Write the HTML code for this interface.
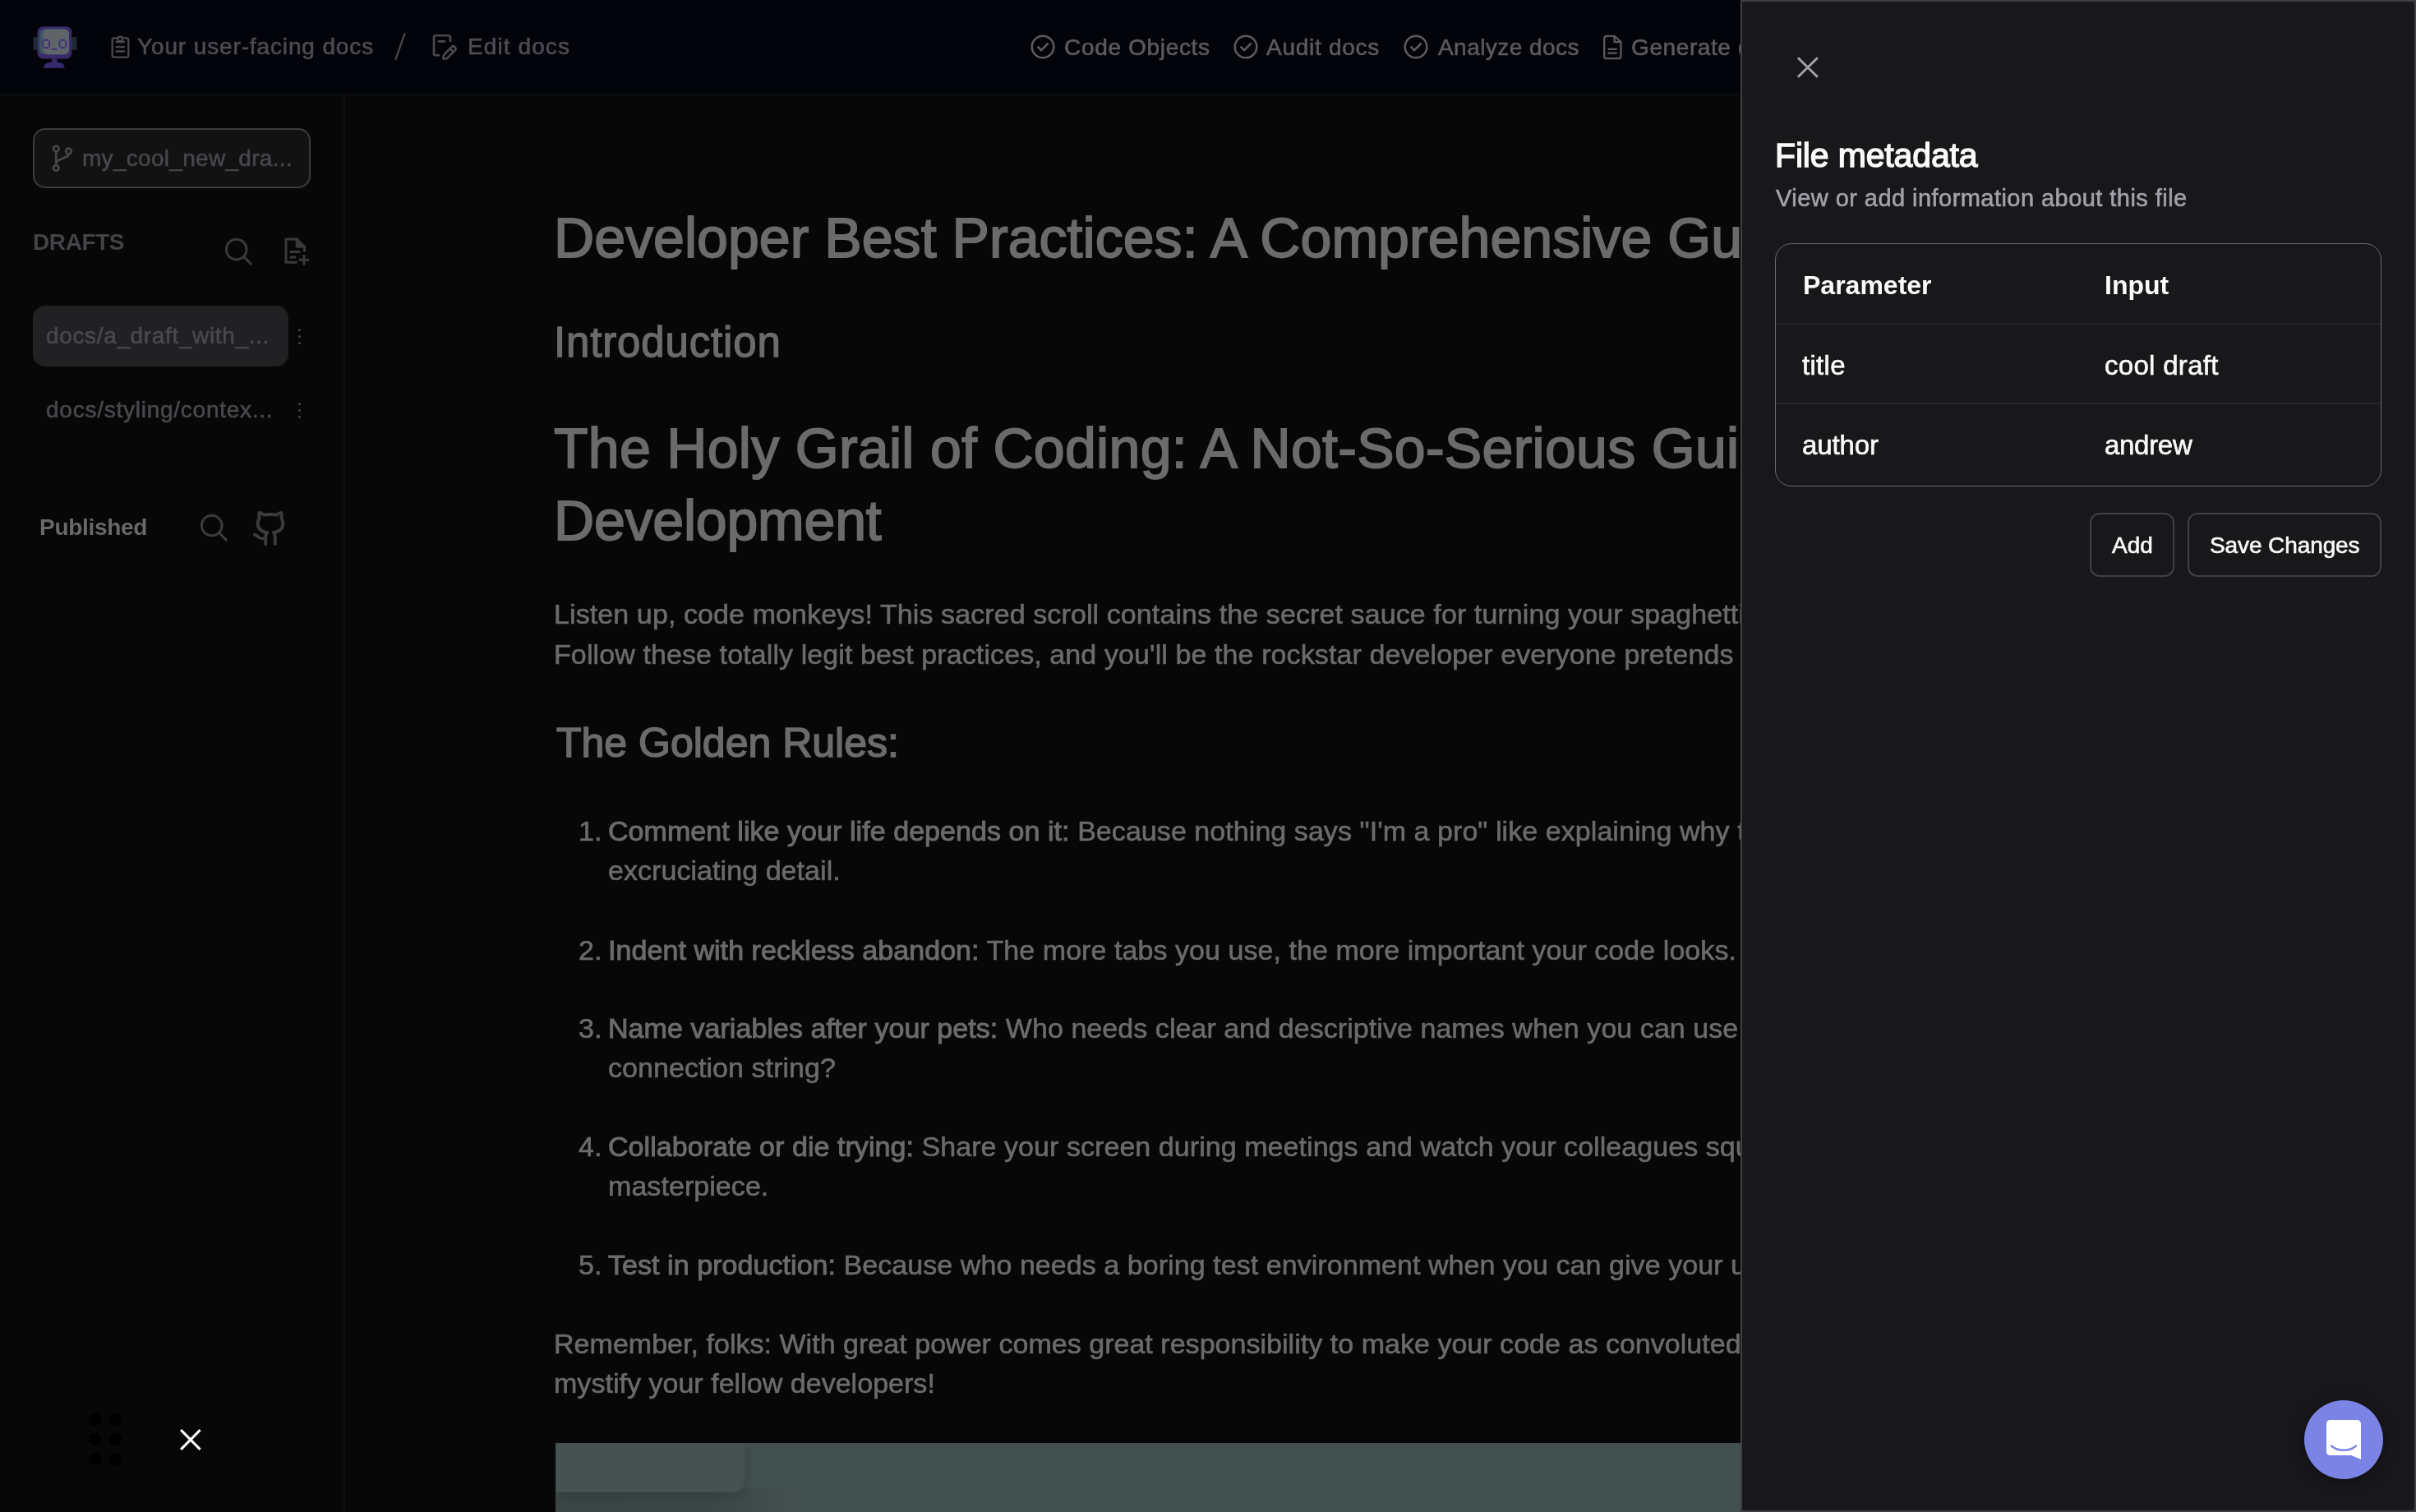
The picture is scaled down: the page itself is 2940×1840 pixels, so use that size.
<!DOCTYPE html>
<html><head><meta charset="utf-8"><title>File metadata</title>
<style>
html,body{margin:0;padding:0;}
@media (max-width:2000px){html{zoom:0.5;}}
body{width:2940px;height:1840px;overflow:hidden;position:relative;background:#070707;font-family:"Liberation Sans",sans-serif;}
.t{position:absolute;white-space:nowrap;line-height:1;will-change:transform;}
.abs{position:absolute;}
#hdr{position:absolute;left:0;top:0;width:2940px;height:114px;background:#03040a;border-bottom:2px solid #0c0d12;}
#side{position:absolute;left:0;top:116px;width:418px;height:1724px;background:#070707;border-right:2px solid #111111;}
#panel{position:absolute;left:2118px;top:0;width:822px;height:1840px;box-sizing:border-box;background:#18181b;border:2px solid #3f3f46;overflow:hidden;}
#panel .t, #panel .abs{margin-left:-2px;margin-top:-2px;}
</style></head>
<body>
<div id="hdr"></div><svg class="abs" style="left:38px;top:30px" width="58" height="56" viewBox="38 30 58 56">
<rect x="40.5" y="45" width="53" height="16" rx="1.5" fill="#1d2830"/>
<rect x="45.5" y="32.3" width="41.8" height="39.3" rx="7" fill="#3a2a6a"/>
<rect x="48" y="35.4" width="36" height="30.8" rx="6" fill="#3d5560"/>
<rect x="52.2" y="35.4" width="31.8" height="30.8" rx="6" fill="#5e6468"/>
<g fill="#3d2a7e">
<rect x="51.3" y="49.6" width="1.8" height="7.6"/><rect x="59.1" y="49.6" width="1.8" height="7.6"/>
<rect x="53.1" y="47.8" width="6" height="1.8"/><rect x="53.1" y="57.2" width="6" height="1.8"/>
<rect x="71.6" y="49.6" width="1.8" height="7.6"/><rect x="79.3" y="49.6" width="1.8" height="7.6"/>
<rect x="73.4" y="47.8" width="5.9" height="1.8"/><rect x="73.4" y="57.2" width="5.9" height="1.8"/>
<rect x="62.5" y="59.2" width="7.5" height="1.6"/>
</g>
<rect x="63" y="71.6" width="6.5" height="4.5" fill="#36296f"/>
<path d="M53.4 82.8 Q53.4 75.7 62 75.7 L70 75.7 Q78.6 75.7 78.6 82.8 Z" fill="#36296f"/>
<path d="M55.5 81.2h5" stroke="#5a5080" stroke-width="1" opacity="0.6"/>
</svg><svg class="abs" style="left:128px;top:38px" width="36" height="38" viewBox="128 38 36 38" fill="none" stroke="#4a4a4e" stroke-width="2.3" stroke-linecap="round" stroke-linejoin="round">
<path d="M142 46.3h-3.3a2 2 0 0 0-2 2v19.3a2 2 0 0 0 2 2h15.6a2 2 0 0 0 2-2V48.3a2 2 0 0 0-2-2H151"/>
<rect x="143.6" y="44.8" width="5.3" height="5" rx="1.2"/>
<path d="M141.6 51h9.4M141.6 57.1h9.4M141.6 62.5h9.4"/>
</svg><div class="t" style="left:167px;top:43.0px;font-size:28px;color:#4c4c52;font-weight:400;letter-spacing:0.87px;-webkit-text-stroke:0.6px currentColor;">Your user-facing docs</div>
<svg class="abs" style="left:476px;top:38px" width="22" height="38" viewBox="0 0 22 38"><path d="M16.5 3 L5.5 34" stroke="#45454a" stroke-width="2.3" stroke-linecap="round"/></svg><svg class="abs" style="left:520px;top:36px" width="40" height="40" viewBox="520 36 40 40" fill="none" stroke="#4a4a4e" stroke-width="2.6" stroke-linecap="round" stroke-linejoin="round">
<path d="M534 67.2h-3.8a2.2 2.2 0 0 1-2.2-2.2V45.5a2.2 2.2 0 0 1 2.2-2.2h15.6a2.2 2.2 0 0 1 2.2 2.2V50"/>
<path d="M533.8 50.4h7.2"/>
<path d="M549.5 57.2a2.9 2.9 0 0 1 4.1 4.1l-9.3 9.3c-.6.6-1.4.9-2.2.9h-2.6v-2.6c0-.8.3-1.6.9-2.2z"/>
<path d="M547.6 59.1l4.1 4.1"/>
</svg><div class="t" style="left:568.5px;top:43.0px;font-size:28px;color:#4c4c52;font-weight:400;letter-spacing:1.1px;-webkit-text-stroke:0.6px currentColor;">Edit docs</div>
<svg class="abs" style="left:1252px;top:40px" width="34" height="34" viewBox="0 0 34 34" fill="none" stroke="#5b5b5c" stroke-width="2.6" stroke-linejoin="miter"><circle cx="17" cy="17" r="13.3"/><path d="M10.6 16.6l4.4 4.5 8.6-8.6"/></svg><div class="t" style="left:1294.5px;top:43.5px;font-size:28px;color:#5b5b5c;font-weight:400;letter-spacing:0.67px;-webkit-text-stroke:0.6px currentColor;">Code Objects</div>
<svg class="abs" style="left:1498.5px;top:40px" width="34" height="34" viewBox="0 0 34 34" fill="none" stroke="#5b5b5c" stroke-width="2.6" stroke-linejoin="miter"><circle cx="17" cy="17" r="13.3"/><path d="M10.6 16.6l4.4 4.5 8.6-8.6"/></svg><div class="t" style="left:1541px;top:43.5px;font-size:28px;color:#5b5b5c;font-weight:400;letter-spacing:0.72px;-webkit-text-stroke:0.6px currentColor;">Audit docs</div>
<svg class="abs" style="left:1706px;top:40px" width="34" height="34" viewBox="0 0 34 34" fill="none" stroke="#5b5b5c" stroke-width="2.6" stroke-linejoin="miter"><circle cx="17" cy="17" r="13.3"/><path d="M10.6 16.6l4.4 4.5 8.6-8.6"/></svg><div class="t" style="left:1749.5px;top:43.5px;font-size:28px;color:#5b5b5c;font-weight:400;letter-spacing:0.44px;-webkit-text-stroke:0.6px currentColor;">Analyze docs</div>
<svg class="abs" style="left:1946px;top:38px" width="34" height="38" viewBox="1946 38 34 38" fill="none" stroke="#5b5b5c" stroke-width="2.3" stroke-linecap="round" stroke-linejoin="round"><path d="M1964.6 43.8h-9.6a2.8 2.8 0 0 0-2.8 2.8v21.8a2.8 2.8 0 0 0 2.8 2.8h14.6a2.8 2.8 0 0 0 2.8-2.8V51.2z"/><path d="M1964.6 43.8v7.4h7.6"/><path d="M1957.4 59.8h9.6M1957.4 64.6h9.6"/></svg><div class="t" style="left:1985px;top:43.5px;font-size:28px;color:#5b5b5c;font-weight:400;letter-spacing:0.6px;-webkit-text-stroke:0.6px currentColor;">Generate docs</div>
<div id="side"></div><div class="abs" style="left:40px;top:156px;width:338px;height:73px;box-sizing:border-box;border:2px solid #3d3d3f;border-radius:15px;background:#121212"></div><svg class="abs" style="left:60px;top:174px" width="32" height="38" viewBox="0 0 32 38" fill="none" stroke="#45454a" stroke-width="2.8" stroke-linecap="round"><circle cx="8.3" cy="7" r="3.3"/><circle cx="8.3" cy="30.5" r="3.3"/><circle cx="23.5" cy="10" r="3.3"/><path d="M8.3 10.3v16.9M23.5 13.3c0 6-15.2 5-15.2 12"/></svg><div class="t" style="left:100px;top:179.1px;font-size:28px;color:#46464c;font-weight:400;letter-spacing:0.3px;-webkit-text-stroke:0.6px currentColor;">my_cool_new_dra...</div>
<div class="t" style="left:40px;top:280.8px;font-size:28px;color:#434348;font-weight:700;letter-spacing:-0.4px;">DRAFTS</div>
<svg class="abs" style="left:270px;top:286px" width="40" height="40" viewBox="0 0 40 40" fill="none" stroke="#3a3a3a" stroke-width="3" stroke-linecap="round"><circle cx="17.7" cy="17.5" r="12.3"/><path d="M26.5 26.3l8.8 8.8"/></svg><svg class="abs" style="left:344px;top:287px" width="36" height="38" viewBox="0 0 36 38" fill="none" stroke="#3a3a3a" stroke-width="3" stroke-linecap="square"><path d="M16.2 32.3H4V4h13.2l9.3 9.3V18" stroke-linejoin="round"/><path d="M17.2 4v9.3h9.3" fill="#3a3a3a" stroke-linejoin="round"/><path d="M10.2 19.5h9.5M10.2 25.9h4.5M25.9 24.5v9.7M21.2 29.2h9.3"/></svg><div class="abs" style="left:40px;top:372px;width:311px;height:74px;border-radius:15px;background:#212123"></div><div class="t" style="left:56px;top:394.8px;font-size:28px;color:#48484e;font-weight:400;letter-spacing:0.65px;-webkit-text-stroke:0.6px currentColor;">docs/a_draft_with_...</div>
<div class="abs" style="left:362.8px;top:399.8px;width:3.6px;height:3.6px;border-radius:50%;background:#46464b"></div><div class="abs" style="left:362.8px;top:407.8px;width:3.6px;height:3.6px;border-radius:50%;background:#46464b"></div><div class="abs" style="left:362.8px;top:415.8px;width:3.6px;height:3.6px;border-radius:50%;background:#46464b"></div><div class="t" style="left:56px;top:484.8px;font-size:28px;color:#48484e;font-weight:400;letter-spacing:0.75px;-webkit-text-stroke:0.6px currentColor;">docs/styling/contex...</div>
<div class="abs" style="left:362.8px;top:489.9px;width:3.6px;height:3.6px;border-radius:50%;background:#46464b"></div><div class="abs" style="left:362.8px;top:497.9px;width:3.6px;height:3.6px;border-radius:50%;background:#46464b"></div><div class="abs" style="left:362.8px;top:505.9px;width:3.6px;height:3.6px;border-radius:50%;background:#46464b"></div><div class="t" style="left:48px;top:628.3px;font-size:28px;color:#686868;font-weight:700;letter-spacing:-0.3px;">Published</div>
<svg class="abs" style="left:240px;top:622px" width="40" height="40" viewBox="0 0 40 40" fill="none" stroke="#3c3c3c" stroke-width="3" stroke-linecap="round"><circle cx="17.7" cy="17.5" r="12.3"/><path d="M26.5 26.3l8.8 8.8"/></svg><svg class="abs" style="left:306px;top:620px" width="46" height="46" viewBox="0 0 24 24" fill="none" stroke="#3c3c3c" stroke-width="2.0" stroke-linecap="round" stroke-linejoin="round"><path d="M15 22v-4a4.8 4.8 0 0 0-1-3.5c3 0 6-2 6-5.5.08-1.25-.27-2.48-1-3.5.28-1.15.28-2.35 0-3.5 0 0-1 0-3 1.5-2.64-.5-5.36-.5-8 0C6 2 5 2 5 2c-.3 1.15-.3 2.35 0 3.5A5.403 5.403 0 0 0 4 9c0 3.5 3 5.5 6 5.5-.39.49-.68 1.05-.85 1.65-.17.6-.22 1.23-.15 1.85v4"/><path d="M9 18c-4.51 2-5-2-7-2"/></svg><div class="abs" style="left:108.4px;top:1720.1000000000001px;width:15.2px;height:15.2px;border-radius:50%;background:#000"></div><div class="abs" style="left:108.4px;top:1744.1000000000001px;width:15.2px;height:15.2px;border-radius:50%;background:#000"></div><div class="abs" style="left:108.4px;top:1768.1000000000001px;width:15.2px;height:15.2px;border-radius:50%;background:#000"></div><div class="abs" style="left:132.4px;top:1720.1000000000001px;width:15.2px;height:15.2px;border-radius:50%;background:#000"></div><div class="abs" style="left:132.4px;top:1744.1000000000001px;width:15.2px;height:15.2px;border-radius:50%;background:#000"></div><div class="abs" style="left:132.4px;top:1768.1000000000001px;width:15.2px;height:15.2px;border-radius:50%;background:#000"></div><svg class="abs" style="left:214px;top:1734px" width="36" height="36" viewBox="214 1734 36 36" stroke="#fff" stroke-width="3"><path d="M220.1 1740.1l23.5 23.8M243.6 1740.1l-23.5 23.8"/></svg><div class="t" style="left:674px;top:255.1px;font-size:68px;color:#6b6b6b;font-weight:400;letter-spacing:0.05px;-webkit-text-stroke:1.8px #6b6b6b;">Developer Best Practices: A Comprehensive Guide</div>
<div class="t" style="left:674px;top:391.2px;font-size:51px;color:#6b6b6b;font-weight:400;letter-spacing:0.85px;-webkit-text-stroke:1.3px #6b6b6b;">Introduction</div>
<div class="t" style="left:674px;top:510.7px;font-size:68px;color:#6b6b6b;font-weight:400;letter-spacing:0.3px;-webkit-text-stroke:1.8px #6b6b6b;">The Holy Grail of Coding: A Not-So-Serious Guide to</div>
<div class="t" style="left:674px;top:598.9px;font-size:68px;color:#6b6b6b;font-weight:400;letter-spacing:-0.2px;-webkit-text-stroke:1.8px #6b6b6b;">Development</div>
<div class="t" style="left:674px;top:730.4px;font-size:34px;color:#6b6b6b;font-weight:400;letter-spacing:0.1px;-webkit-text-stroke:0.6px currentColor;">Listen up, code monkeys! This sacred scroll contains the secret sauce for turning your spaghetti code</div>
<div class="t" style="left:674px;top:778.5px;font-size:34px;color:#6b6b6b;font-weight:400;letter-spacing:0.1px;-webkit-text-stroke:0.6px currentColor;">Follow these totally legit best practices, and you&#39;ll be the rockstar developer everyone pretends to be.</div>
<div class="t" style="left:677px;top:879.1px;font-size:50px;color:#6b6b6b;font-weight:400;letter-spacing:0px;-webkit-text-stroke:1.6px #6b6b6b;">The Golden Rules:</div>
<div class="t" style="left:703.5px;top:994.1px;font-size:34px;color:#6b6b6b;letter-spacing:0.06px;-webkit-text-stroke:0.6px currentColor;">1.</div>
<div class="t" style="left:740px;top:994.1px;font-size:34px;color:#6b6b6b;letter-spacing:0.06px;-webkit-text-stroke:0.6px currentColor;"><span style="-webkit-text-stroke:1.0px #6b6b6b">Comment like your life depends on it:</span> Because nothing says &quot;I&#39;m a pro&quot; like explaining why this works</div>
<div class="t" style="left:740px;top:1042.2px;font-size:34px;color:#6b6b6b;font-weight:400;letter-spacing:0.06px;-webkit-text-stroke:0.6px currentColor;">excruciating detail.</div>
<div class="t" style="left:703.5px;top:1138.5px;font-size:34px;color:#6b6b6b;letter-spacing:0.06px;-webkit-text-stroke:0.6px currentColor;">2.</div>
<div class="t" style="left:740px;top:1138.5px;font-size:34px;color:#6b6b6b;letter-spacing:0.06px;-webkit-text-stroke:0.6px currentColor;"><span style="-webkit-text-stroke:1.0px #6b6b6b">Indent with reckless abandon:</span> The more tabs you use, the more important your code looks.</div>
<div class="t" style="left:703.5px;top:1233.7px;font-size:34px;color:#6b6b6b;letter-spacing:0.06px;-webkit-text-stroke:0.6px currentColor;">3.</div>
<div class="t" style="left:740px;top:1233.7px;font-size:34px;color:#6b6b6b;letter-spacing:0.06px;-webkit-text-stroke:0.6px currentColor;"><span style="-webkit-text-stroke:1.0px #6b6b6b">Name variables after your pets:</span> Who needs clear and descriptive names when you can use Fluffy as a</div>
<div class="t" style="left:740px;top:1281.7px;font-size:34px;color:#6b6b6b;font-weight:400;letter-spacing:0.06px;-webkit-text-stroke:0.6px currentColor;">connection string?</div>
<div class="t" style="left:703.5px;top:1378.0px;font-size:34px;color:#6b6b6b;letter-spacing:0.06px;-webkit-text-stroke:0.6px currentColor;">4.</div>
<div class="t" style="left:740px;top:1378.0px;font-size:34px;color:#6b6b6b;letter-spacing:0.06px;-webkit-text-stroke:0.6px currentColor;"><span style="-webkit-text-stroke:1.0px #6b6b6b">Collaborate or die trying:</span> Share your screen during meetings and watch your colleagues squirm at your</div>
<div class="t" style="left:740px;top:1425.7px;font-size:34px;color:#6b6b6b;font-weight:400;letter-spacing:0.06px;-webkit-text-stroke:0.6px currentColor;">masterpiece.</div>
<div class="t" style="left:703.5px;top:1522.0px;font-size:34px;color:#6b6b6b;letter-spacing:0.06px;-webkit-text-stroke:0.6px currentColor;">5.</div>
<div class="t" style="left:740px;top:1522.0px;font-size:34px;color:#6b6b6b;letter-spacing:0.06px;-webkit-text-stroke:0.6px currentColor;"><span style="-webkit-text-stroke:1.0px #6b6b6b">Test in production:</span> Because who needs a boring test environment when you can give your users</div>
<div class="t" style="left:674px;top:1618.2px;font-size:34px;color:#6b6b6b;font-weight:400;letter-spacing:0.03px;-webkit-text-stroke:0.6px currentColor;">Remember, folks: With great power comes great responsibility to make your code as convoluted as</div>
<div class="t" style="left:674px;top:1665.7px;font-size:34px;color:#6b6b6b;font-weight:400;letter-spacing:0.03px;-webkit-text-stroke:0.6px currentColor;">mystify your fellow developers!</div>
<div class="abs" style="left:676px;top:1756px;width:1442px;height:84px;background:#435050;overflow:hidden"><div class="abs" style="left:0px;top:56px;width:300px;height:28px;background:linear-gradient(to right,#3a4544 0%,#3b4645 60%,rgba(67,80,80,0) 100%)"></div><div class="abs" style="left:0px;top:0px;width:230px;height:60px;background:#455251;border-bottom-right-radius:14px;box-shadow:4px 6px 14px rgba(0,0,0,0.12)"></div></div><div id="panel"><svg class="abs" style="left:64px;top:64px" width="36" height="36" viewBox="2182 64 36 36" stroke="#a1a1aa" stroke-width="3"><path d="M2187.9 70.2l23.9 23.5M2211.8 70.2l-23.9 23.5"/></svg><div class="t" style="left:41.69999999999982px;top:169.1px;font-size:41px;color:#fafafa;font-weight:400;letter-spacing:-0.15px;-webkit-text-stroke:1.4px #fafafa;">File metadata</div>
<div class="t" style="left:43px;top:226.8px;font-size:29px;color:#a1a1aa;font-weight:400;letter-spacing:0.45px;-webkit-text-stroke:0.6px currentColor;">View or add information about this file</div>
<div class="abs" style="left:42px;top:296px;width:738px;height:296px;box-sizing:border-box;border:1.5px solid #6a6a6e;border-radius:20px"></div><div class="abs" style="left:43.5px;top:393px;width:735px;height:2px;background:#27272a"></div><div class="abs" style="left:43.5px;top:490px;width:735px;height:2px;background:#27272a"></div><div class="t" style="left:75.5px;top:330.7px;font-size:32px;color:#fafafa;font-weight:700;letter-spacing:0px;">Parameter</div>
<div class="t" style="left:443px;top:330.7px;font-size:32px;color:#fafafa;font-weight:700;letter-spacing:0px;">Input</div>
<div class="t" style="left:75px;top:427.6px;font-size:33px;color:#fafafa;font-weight:400;letter-spacing:0.3px;-webkit-text-stroke:0.6px currentColor;">title</div>
<div class="t" style="left:443px;top:427.6px;font-size:33px;color:#fafafa;font-weight:400;letter-spacing:0.3px;-webkit-text-stroke:0.6px currentColor;">cool draft</div>
<div class="t" style="left:75px;top:525.1px;font-size:33px;color:#fafafa;font-weight:400;letter-spacing:-0.1px;-webkit-text-stroke:0.6px currentColor;">author</div>
<div class="t" style="left:443px;top:525.1px;font-size:33px;color:#fafafa;font-weight:400;letter-spacing:-0.3px;-webkit-text-stroke:0.6px currentColor;">andrew</div>
<div class="abs" style="left:425px;top:624px;width:103px;height:78px;box-sizing:border-box;border:2px solid #3f3f46;border-radius:12px"></div><div class="abs" style="left:544px;top:624px;width:236px;height:78px;box-sizing:border-box;border:2px solid #3f3f46;border-radius:12px"></div><div class="t" style="left:452px;top:649.5px;font-size:28px;color:#fafafa;font-weight:400;letter-spacing:0px;-webkit-text-stroke:0.6px currentColor;">Add</div>
<div class="t" style="left:571px;top:649.5px;font-size:28px;color:#fafafa;font-weight:400;letter-spacing:-0.1px;-webkit-text-stroke:0.6px currentColor;">Save Changes</div>
<div class="abs" style="left:686px;top:1704px;width:96px;height:96px;border-radius:50%;background:#7b83e5;box-shadow:0 2px 16px rgba(0,0,0,0.35)"></div><svg class="abs" style="left:710px;top:1726px" width="48" height="52" viewBox="0 0 48 52"><path d="M3 6.5a4.5 4.5 0 0 1 4.5-4.5h33A4.5 4.5 0 0 1 45 6.5V50L33 45H7.5A4.5 4.5 0 0 1 3 40.5z" fill="#fff"/><path d="M9 33.5c8 7 22 7 30 0" fill="none" stroke="#7b83e5" stroke-width="2.4" stroke-linecap="round"/></svg></div>
</body></html>
